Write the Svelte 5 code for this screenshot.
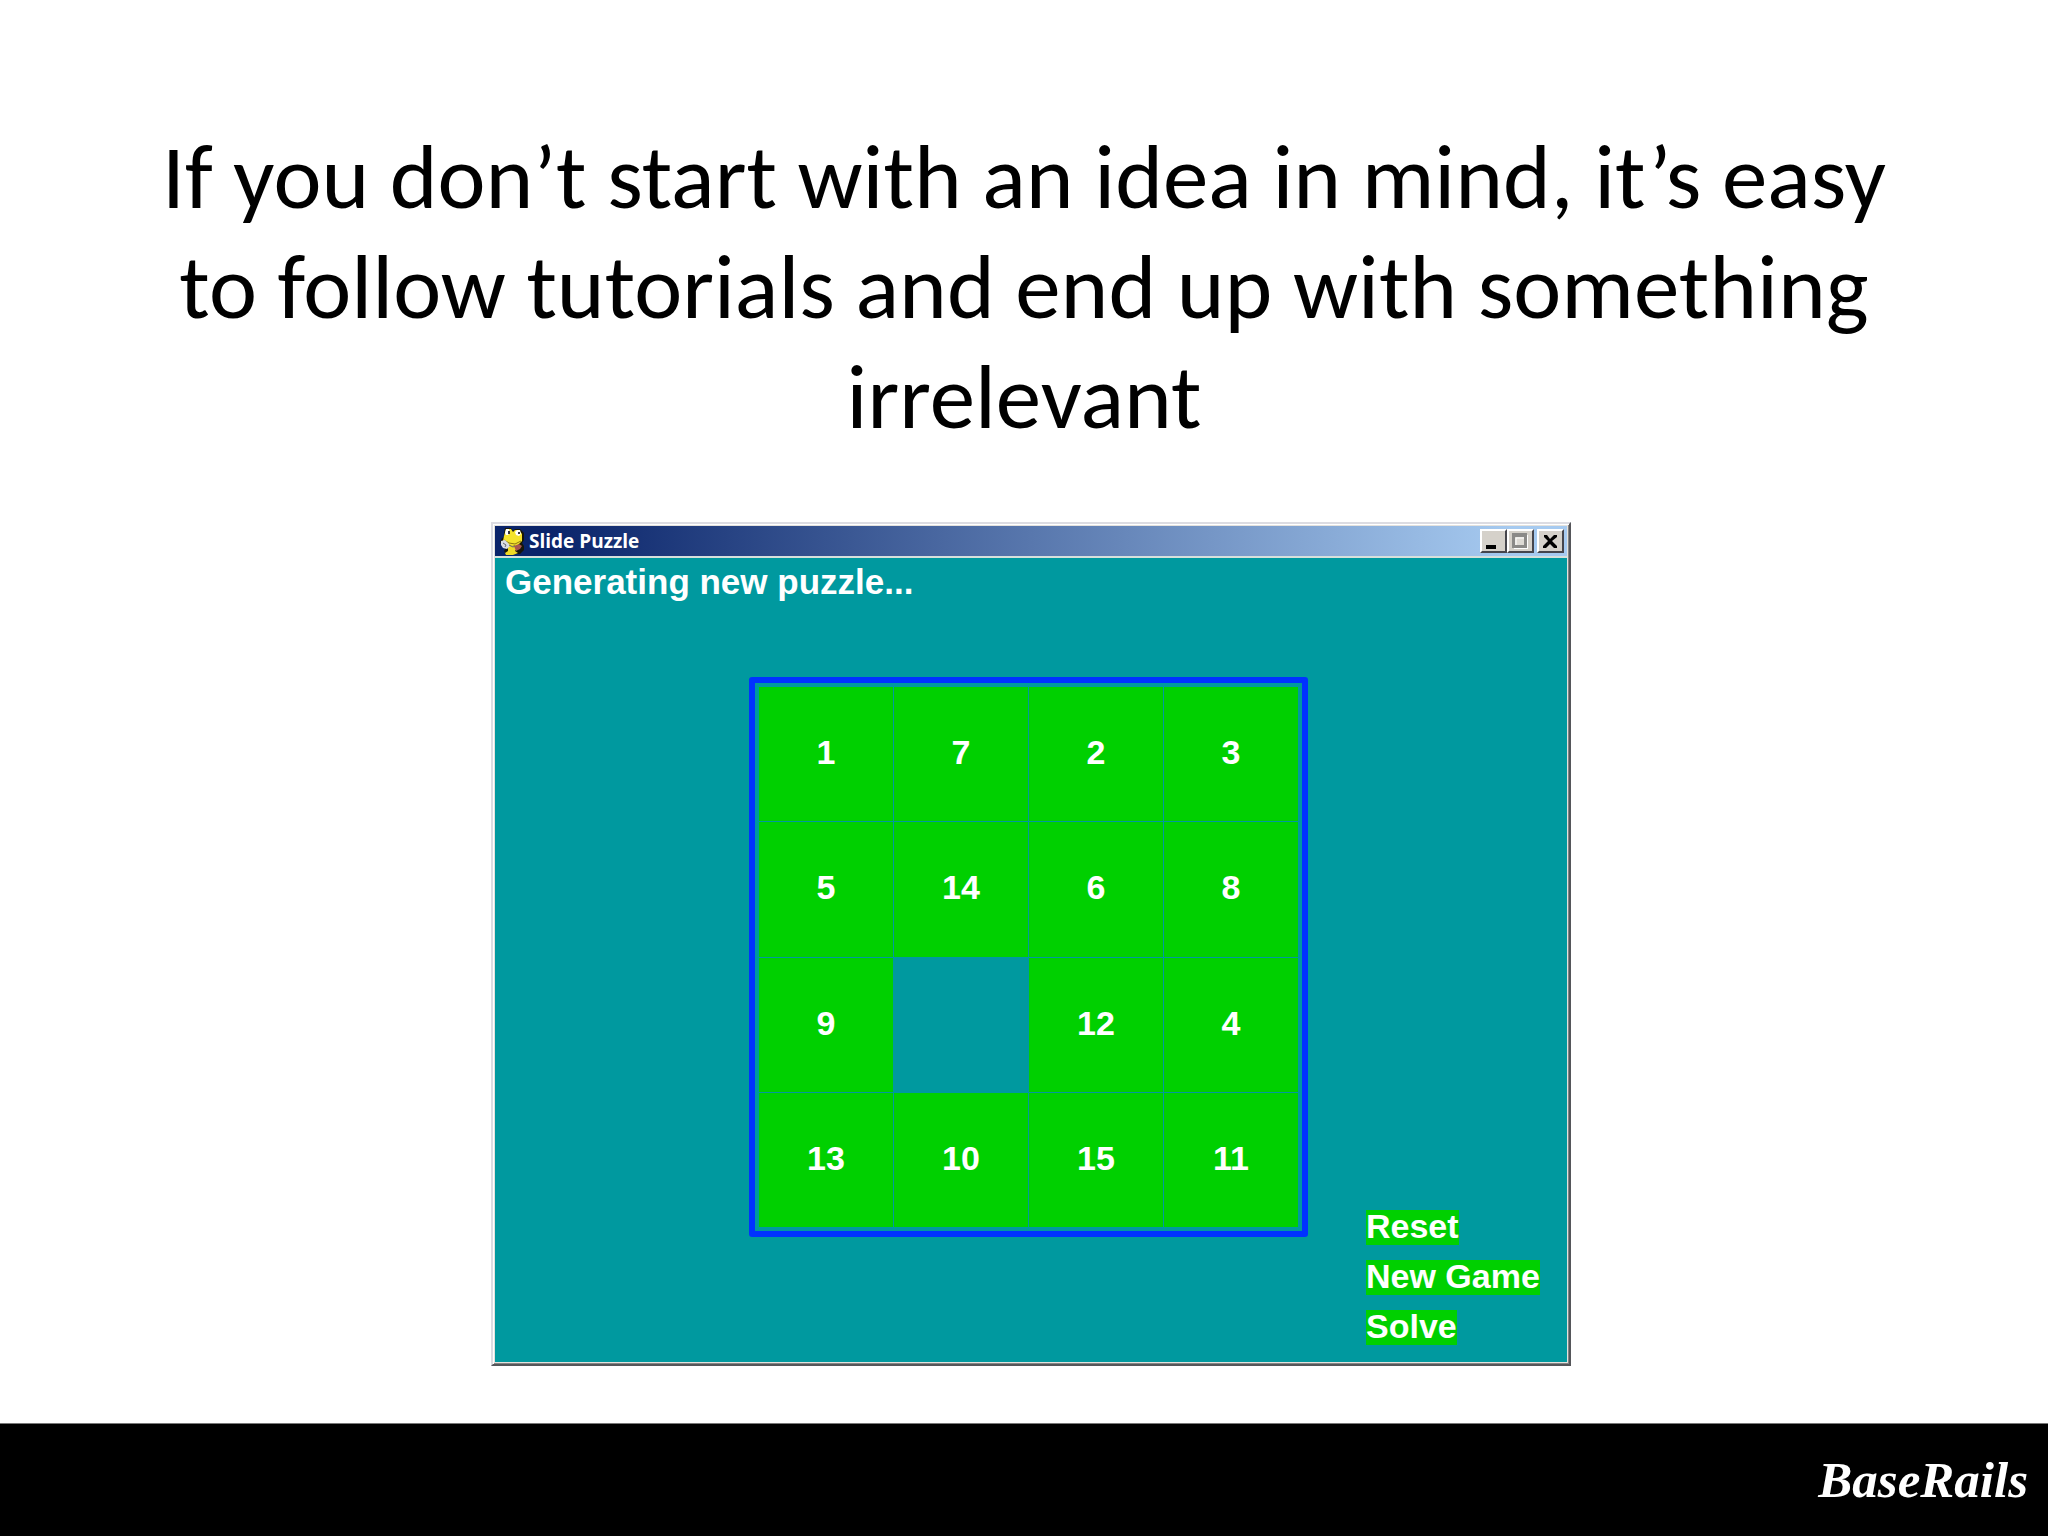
<script>
  const tiles = [1, 7, 2, 3, 5, 14, 6, 8, 9, null, 12, 4, 13, 10, 15, 11];
  const actions = ['Reset', 'New Game', 'Solve'];
</script>

<div class="slide">
  <main>
    <h1>If you don’t start with an idea in mind, it’s easy to follow tutorials and end up with something irrelevant</h1>

    <section class="window" aria-label="Slide Puzzle">
      <header class="titlebar">
        <svg class="snake" viewBox="0 0 24 28" aria-hidden="true">
          <path d="M5 1h6l2 3 2-2h5l4 4v7l-2 3 2 3v4l-4 4H6l-2-3 2-3-4-2-2-4 2-4 2-1V6z" fill="#171608" />
          <path d="M6 2h5l2 3 2-2h4l3 4v7l-4 4-6 1-6-2-3-3 1-5z" fill="#f4e32c" />
          <path d="M8 17l6 2 3-2v4l-2 3 3 2-5 2H6l-1-2 3-2z" fill="#f0da25" />
          <path d="M6 2h3l1 4-2 2H6L5 6zM17 3h3l1 4-2 2-3-1-1-3z" fill="#fff" />
          <path d="M8 4h2v3H8zM18 5h2v2h-2z" fill="#34343c" />
          <path d="M4 13l5 3 6 1 6-3" fill="none" stroke="#8c7612" />
          <path d="M1 14l4-1 3 3 2 3-3 3-4-1-2-3z" fill="#d9dce3" />
          <path d="M3 16l3 2-1 2M9 18l4 2 2-1" fill="none" stroke="#62646e" />
          <path d="M14 19l5-2 3 2-2 3-4 2z" fill="#a8564f" />
        </svg>
        <span class="caption">Slide Puzzle</span>
        <div class="controls">
          <button aria-label="Minimize">
            <svg viewBox="0 0 22 19"><path d="M4 13h10v4H4z" fill="#000" /></svg>
          </button>
          <button aria-label="Maximize">
            <svg viewBox="0 0 22 19">
              <path d="M5 3h14v14H5z" fill="#fff" />
              <path d="M3 1h15v15H3zM6 5v8h9V5z" fill="#8b8a88" fill-rule="evenodd" />
              <path d="M6 5h9v8H6z" fill="#dedbd5" />
              <path d="M7 13V6h8" fill="none" stroke="#fff" />
            </svg>
          </button>
          <button aria-label="Close" class="close">
            <svg viewBox="0 0 22 19"><path d="M5 3h3l3 4 4-4h3v2l-5 4 5 5v2h-3l-4-4-4 4H4v-2l5-5-4-4z" fill="#000" /></svg>
          </button>
        </div>
      </header>

      <div class="game">
        <p class="message">Generating new puzzle...</p>
        <div class="board">
          {#each tiles as tile}
            {#if tile === null}
              <span class="gap"></span>
            {:else}
              <button class="tile">{tile}</button>
            {/if}
          {/each}
        </div>
        <div class="actions">
          {#each actions as action}
            <button>{action}</button>
          {/each}
        </div>
      </div>
    </section>
  </main>

  <footer><span class="brand">BaseRails</span></footer>
</div>

<style>
  :global(body) {
    background: #fff;
  }

  .slide {
    display: flex;
    flex-direction: column;
    min-height: 100vh;
  }

  main {
    flex: 1;
    display: flex;
    flex-direction: column;
    align-items: center;
    padding: 122px 120px 54px;
  }

  h1 {
    max-width: 1760px;
    margin: 0 0 70px;
    font: 400 91px/110px Carlito, Calibri, Lato, sans-serif;
    text-align: center;
    color: #000;
  }

  button {
    margin: 0;
    padding: 0;
    border: 0;
    font: inherit;
    color: inherit;
    cursor: pointer;
  }

  .window {
    width: 60%;
    min-width: 960px;
    max-width: 1080px;
    box-sizing: border-box;
    margin-left: 14px;
    padding: 2px;
    background: #e4e2de;
    border: 2px solid;
    border-color: #dcdce2 #55565a #55565a #dcdce2;
    box-shadow: inset 1px 1px #fff, inset -1px -1px #858585;
  }

  .titlebar {
    display: flex;
    align-items: center;
    height: 30px;
    padding: 0 3px 0 5px;
    border-bottom: 2px solid #d6e0dc;
    background: linear-gradient(90deg, #0a246a 5%, #a6caf0 95%);
  }

  .snake {
    width: 24px;
    height: 28px;
  }

  .caption {
    flex: 1;
    margin-left: 5px;
    font: 700 19px/28px "Open Sans", sans-serif;
    color: #fff;
  }

  .controls {
    display: flex;
  }

  .controls button {
    width: 27px;
    height: 24px;
    box-sizing: border-box;
    background: #d5d1ca;
    border: 2px solid;
    border-color: #fff #45454c #45454c #fff;
  }

  .controls .close {
    margin-left: 3px;
  }

  .controls svg {
    display: block;
    width: 22px;
    height: 19px;
  }

  .game {
    display: grid;
    grid-template-columns: 254px 559px 1fr;
    grid-template-rows: 119px 560px 125px;
    background: #00999f;
    color: #fff;
    font: 700 34px/35px "Liberation Sans", Arial, sans-serif;
  }

  .message {
    grid-area: 1 / 1 / 2 / 4;
    margin: 0;
    padding: 6px 10px;
    font-size: 35px;
  }

  .board {
    grid-area: 2 / 2;
    display: grid;
    grid-template-columns: repeat(4, 1fr);
    grid-template-rows: repeat(4, 1fr);
    gap: 1px;
    padding: 4px;
    border: 6px solid #0032ff;
    border-radius: 3px;
  }

  .tile {
    padding-bottom: 3px;
    background: #00d000;
  }

  .actions {
    grid-area: 2 / 3 / 4 / 4;
    display: flex;
    flex-direction: column;
    align-items: flex-start;
    justify-content: flex-end;
    gap: 15px;
    padding: 0 0 17px 58px;
  }

  .actions button {
    background: #00d000;
    line-height: 33px;
    padding-bottom: 2px;
    white-space: nowrap;
  }

  footer {
    display: flex;
    align-items: center;
    justify-content: flex-end;
    height: 112px;
    padding: 0 20px;
    background: #000;
    border-top: 1px solid #777;
  }

  .brand {
    font: italic 700 51px/60px Mistral, "Brush Script MT", "Liberation Serif", serif;
    color: #fff;
  }
</style>
